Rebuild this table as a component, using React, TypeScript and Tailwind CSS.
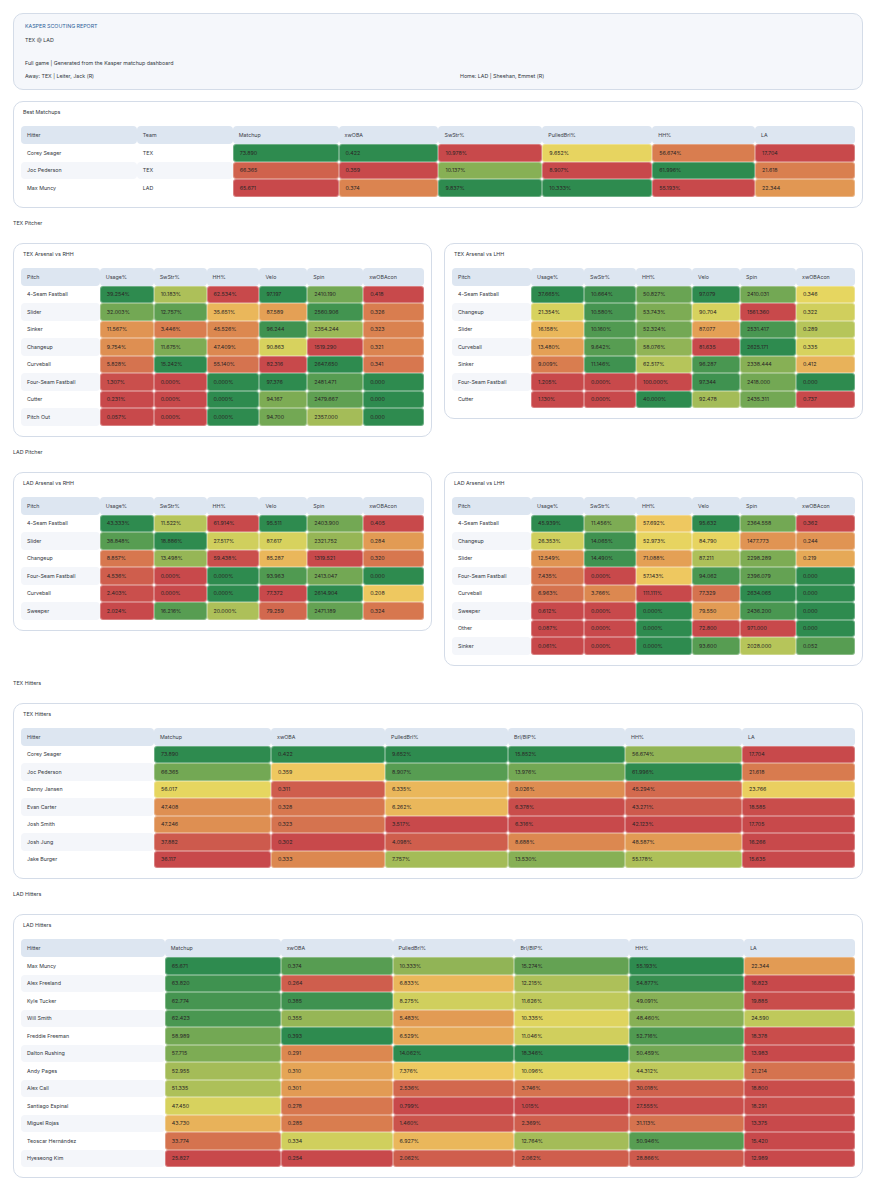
import React from "react";

type C = [string, number];
type Row = { p: string[]; c: C[] };
type Tbl = { title: string; cols: string; headers: string[]; rows: Row[] };

const stops: [number, [number, number, number]][] = [
  [0, [200, 73, 75]],
  [0.15, [210, 104, 78]],
  [0.3, [220, 136, 80]],
  [0.42, [229, 165, 86]],
  [0.5, [238, 200, 96]],
  [0.56, [230, 214, 96]],
  [0.64, [200, 205, 92]],
  [0.75, [150, 182, 86]],
  [0.87, [90, 158, 82]],
  [1, [46, 139, 79]],
];

function color(t: number): string {
  for (let i = 0; i < stops.length - 1; i++) {
    const [a, ca] = stops[i];
    const [b, cb] = stops[i + 1];
    if (t >= a && t <= b) {
      const f = (t - a) / (b - a);
      const c = ca.map((v, k) => Math.round(v + (cb[k] - v) * f));
      return `rgb(${c[0]},${c[1]},${c[2]})`;
    }
  }
  const c = t < 0 ? stops[0][1] : stops[stops.length - 1][1];
  return `rgb(${c[0]},${c[1]},${c[2]})`;
}

const r = (p: string[], ...c: C[]): Row => ({ p, c });

const best: Tbl = {
  title: "Best Matchups",
  cols: "grid-cols-[116fr_96fr_106fr_100fr_104fr_110fr_103fr_100fr]",
  headers: ["Hitter", "Team", "Matchup", "xwOBA", "SwStr%", "PulledBrl%", "HH%", "LA"],
  rows: [
    r(["Corey Seager", "TEX"], ["73.890", 1], ["0.422", 1], ["10.978%", 0], ["9.652%", 0.55], ["56.674%", 0.25], ["17.704", 0]),
    r(["Joc Pederson", "TEX"], ["66.365", 0.12], ["0.359", 0], ["10.137%", 0.78], ["8.907%", 0], ["61.996%", 1], ["21.618", 0.26]),
    r(["Max Muncy", "LAD"], ["65.671", 0], ["0.374", 0.28], ["9.837%", 1], ["10.333%", 1], ["55.193%", 0], ["22.344", 0.36]),
  ],
};

const pitchHeaders = ["Pitch", "Usage%", "SwStr%", "HH%", "Velo", "Spin", "xwOBAcon"];
const leftCols = "grid-cols-[79fr_54fr_53fr_53fr_48fr_56fr_61fr]";
const rightCols = "grid-cols-[79fr_53fr_52fr_56fr_48fr_56fr_59fr]";

const texR: Tbl = {
  title: "TEX Arsenal vs RHH",
  cols: leftCols,
  headers: pitchHeaders,
  rows: [
    r(["4-Seam Fastball"], ["39.254%", 1], ["10.183%", 0.7], ["62.534%", 0], ["97.197", 1], ["2410.190", 0.82], ["0.418", 0]),
    r(["Slider"], ["32.003%", 0.82], ["12.757%", 0.86], ["35.651%", 0.46], ["87.589", 0.4], ["2560.906", 0.94], ["0.326", 0.25]),
    r(["Sinker"], ["11.567%", 0.35], ["3.446%", 0.25], ["45.526%", 0.3], ["96.244", 0.95], ["2354.244", 0.74], ["0.323", 0.27]),
    r(["Changeup"], ["9.754%", 0.33], ["11.675%", 0.8], ["47.409%", 0.3], ["90.863", 0.6], ["1519.290", 0], ["0.321", 0.28]),
    r(["Curveball"], ["5.828%", 0.2], ["15.242%", 1], ["55.140%", 0.2], ["82.316", 0], ["2647.650", 1], ["0.341", 0.22]),
    r(["Four-Seam Fastball"], ["1.307%", 0.03], ["0.000%", 0], ["0.000%", 1], ["97.376", 1], ["2481.471", 0.88], ["0.000", 1]),
    r(["Cutter"], ["0.231%", 0], ["0.000%", 0], ["0.000%", 1], ["94.167", 0.8], ["2479.667", 0.86], ["0.000", 1]),
    r(["Pitch Out"], ["0.057%", 0], ["0.000%", 0], ["0.000%", 1], ["94.700", 0.82], ["2357.000", 0.72], ["0.000", 1]),
  ],
};

const texL: Tbl = {
  title: "TEX Arsenal vs LHH",
  cols: rightCols,
  headers: pitchHeaders,
  rows: [
    r(["4-Seam Fastball"], ["37.665%", 1], ["10.664%", 0.95], ["50.827%", 0.84], ["97.079", 1], ["2410.031", 0.82], ["0.346", 0.56]),
    r(["Changeup"], ["21.354%", 0.6], ["10.580%", 0.93], ["53.743%", 0.8], ["90.704", 0.6], ["1561.360", 0], ["0.322", 0.62]),
    r(["Slider"], ["16.158%", 0.46], ["10.160%", 0.9], ["52.324%", 0.82], ["87.077", 0.4], ["2531.417", 0.92], ["0.289", 0.68]),
    r(["Curveball"], ["13.480%", 0.4], ["9.642%", 0.88], ["58.076%", 0.76], ["81.635", 0], ["2625.171", 1], ["0.335", 0.6]),
    r(["Sinker"], ["9.009%", 0.25], ["11.146%", 0.95], ["62.517%", 0.68], ["96.287", 0.92], ["2338.444", 0.78], ["0.412", 0.45]),
    r(["Four-Seam Fastball"], ["1.205%", 0], ["0.000%", 0], ["100.000%", 0], ["97.344", 0.95], ["2418.000", 0.82], ["0.000", 1]),
    r(["Cutter"], ["1.130%", 0], ["0.000%", 0], ["40.000%", 1], ["92.478", 0.72], ["2435.311", 0.82], ["0.737", 0]),
  ],
};

const ladR: Tbl = {
  title: "LAD Arsenal vs RHH",
  cols: leftCols,
  headers: pitchHeaders,
  rows: [
    r(["4-Seam Fastball"], ["43.333%", 1], ["11.522%", 0.68], ["61.914%", 0], ["95.511", 1], ["2403.900", 0.82], ["0.405", 0]),
    r(["Slider"], ["38.848%", 0.88], ["18.886%", 1], ["27.517%", 0.62], ["87.617", 0.6], ["2321.752", 0.75], ["0.284", 0.38]),
    r(["Changeup"], ["8.857%", 0.22], ["13.498%", 0.75], ["59.438%", 0.03], ["85.287", 0.46], ["1319.521", 0], ["0.320", 0.22]),
    r(["Four-Seam Fastball"], ["4.536%", 0.1], ["0.000%", 0], ["0.000%", 1], ["93.963", 0.9], ["2413.047", 0.82], ["0.000", 1]),
    r(["Curveball"], ["2.403%", 0.03], ["0.000%", 0], ["0.000%", 1], ["77.372", 0], ["2614.904", 1], ["0.208", 0.5]),
    r(["Sweeper"], ["2.024%", 0], ["16.216%", 0.88], ["20.000%", 0.7], ["79.259", 0.15], ["2471.189", 0.85], ["0.324", 0.22]),
  ],
};

const ladL: Tbl = {
  title: "LAD Arsenal vs LHH",
  cols: rightCols,
  headers: pitchHeaders,
  rows: [
    r(["4-Seam Fastball"], ["45.939%", 1], ["11.456%", 0.8], ["57.692%", 0.5], ["95.632", 1], ["2364.558", 0.82], ["0.362", 0]),
    r(["Changeup"], ["26.353%", 0.62], ["14.065%", 0.95], ["52.973%", 0.55], ["84.790", 0.55], ["1477.773", 0.35], ["0.244", 0.35]),
    r(["Slider"], ["12.549%", 0.35], ["14.490%", 0.95], ["71.088%", 0.4], ["87.211", 0.7], ["2298.289", 0.8], ["0.219", 0.43]),
    r(["Four-Seam Fastball"], ["7.435%", 0.22], ["0.000%", 0], ["57.143%", 0.5], ["94.062", 0.92], ["2396.079", 0.85], ["0.000", 1]),
    r(["Curveball"], ["6.963%", 0.2], ["3.766%", 0.3], ["111.111%", 0], ["77.329", 0.2], ["2634.065", 1], ["0.000", 1]),
    r(["Sweeper"], ["0.612%", 0], ["0.000%", 0], ["0.000%", 1], ["79.550", 0.38], ["2436.200", 0.92], ["0.000", 1]),
    r(["Other"], ["0.087%", 0], ["0.000%", 0], ["0.000%", 1], ["72.800", 0], ["971.000", 0], ["0.000", 1]),
    r(["Sinker"], ["0.061%", 0], ["0.000%", 0], ["0.000%", 1], ["93.600", 0.88], ["2028.000", 0.68], ["0.052", 0.88]),
  ],
};

const hitHeaders = ["Hitter", "Matchup", "xwOBA", "PulledBrl%", "Brl/BIP%", "HH%", "LA"];

const texH: Tbl = {
  title: "TEX Hitters",
  cols: "grid-cols-[133fr_117fr_114fr_123fr_117fr_117fr_113fr]",
  headers: hitHeaders,
  rows: [
    r(["Corey Seager"], ["73.890", 1], ["0.422", 1], ["9.652%", 1], ["15.852%", 1], ["56.674%", 0.76], ["17.704", 0]),
    r(["Joc Pederson"], ["66.365", 0.82], ["0.359", 0.5], ["8.907%", 0.88], ["13.976%", 0.82], ["61.996%", 1], ["21.618", 0.24]),
    r(["Danny Jansen"], ["56.017", 0.56], ["0.311", 0.1], ["6.335%", 0.46], ["9.026%", 0.32], ["45.294%", 0.16], ["23.766", 0.53]),
    r(["Evan Carter"], ["47.408", 0.33], ["0.328", 0.22], ["6.262%", 0.46], ["6.378%", 0.02], ["43.271%", 0.08], ["18.585", 0.02]),
    r(["Josh Smith"], ["47.246", 0.33], ["0.323", 0.2], ["3.517%", 0], ["6.316%", 0], ["42.123%", 0], ["17.705", 0]),
    r(["Josh Jung"], ["37.882", 0.08], ["0.302", 0], ["4.098%", 0.1], ["8.688%", 0.3], ["48.587%", 0.38], ["16.266", 0]),
    r(["Jake Burger"], ["36.117", 0], ["0.333", 0.3], ["7.757%", 0.72], ["13.530%", 0.78], ["55.178%", 0.7], ["15.635", 0]),
  ],
};

const ladH: Tbl = {
  title: "LAD Hitters",
  cols: "grid-cols-[144fr_116fr_112fr_122fr_115fr_115fr_111fr]",
  headers: hitHeaders,
  rows: [
    r(["Max Muncy"], ["65.671", 1], ["0.374", 0.88], ["10.333%", 0.76], ["15.274%", 0.85], ["55.193%", 1], ["22.344", 0.38]),
    r(["Alex Freeland"], ["63.820", 0.95], ["0.264", 0.1], ["6.833%", 0.46], ["12.215%", 0.7], ["54.877%", 0.97], ["16.823", 0]),
    r(["Kyle Tucker"], ["62.774", 0.93], ["0.385", 0.95], ["8.275%", 0.62], ["11.626%", 0.66], ["49.091%", 0.78], ["19.885", 0.02]),
    r(["Will Smith"], ["62.423", 0.92], ["0.355", 0.75], ["5.483%", 0.38], ["10.335%", 0.58], ["48.460%", 0.78], ["24.590", 0.66]),
    r(["Freddie Freeman"], ["58.989", 0.82], ["0.393", 1], ["6.529%", 0.43], ["11.046%", 0.62], ["52.716%", 0.9], ["18.378", 0.02]),
    r(["Dalton Rushing"], ["57.715", 0.8], ["0.291", 0.3], ["14.062%", 1], ["18.346%", 1], ["50.459%", 0.82], ["13.983", 0]),
    r(["Andy Pages"], ["52.955", 0.72], ["0.310", 0.42], ["7.376%", 0.5], ["10.096%", 0.57], ["44.312%", 0.66], ["21.214", 0.2]),
    r(["Alex Call"], ["51.335", 0.7], ["0.301", 0.38], ["2.536%", 0.15], ["3.746%", 0.2], ["30.018%", 0.12], ["18.800", 0.02]),
    r(["Santiago Espinal"], ["47.450", 0.6], ["0.278", 0.22], ["0.799%", 0], ["1.015%", 0], ["27.555%", 0.03], ["18.291", 0.02]),
    r(["Miguel Rojas"], ["43.730", 0.45], ["0.285", 0.25], ["1.460%", 0.05], ["2.369%", 0.1], ["31.113%", 0.2], ["13.375", 0]),
    r(["Teoscar Hernández"], ["33.774", 0.2], ["0.334", 0.62], ["6.927%", 0.46], ["12.764%", 0.72], ["50.946%", 0.88], ["15.420", 0]),
    r(["Hyeseong Kim"], ["25.827", 0], ["0.254", 0], ["2.062%", 0.1], ["2.062%", 0.1], ["28.866%", 0.08], ["12.989", 0]),
  ],
};

function DataTable({ t }: { t: Tbl }) {
  return (
    <div className="flex flex-col">
      <div className={`grid ${t.cols}`}>
        {t.headers.map((h) => (
          <div key={h} className="h-[18px] flex items-center px-[6px] rounded-[4px] bg-[#dde6f1] text-[#3b4048] whitespace-nowrap overflow-hidden">
            {h}
          </div>
        ))}
      </div>
      {t.rows.map((row, i) => (
        <div key={i} className={`grid ${t.cols}`}>
          {row.p.map((x, k) => (
            <div
              key={k}
              className={`h-[17.5px] flex items-center px-[6px] rounded-[4px] text-[#33373d] whitespace-nowrap overflow-hidden ${i % 2 === 1 ? "bg-[#f4f6fa]" : ""}`}
            >
              {x}
            </div>
          ))}
          {row.c.map(([v, tv], k) => (
            <div
              key={k}
              className="h-[17.5px] flex items-center px-[6px] rounded-[3px] border border-white/30 text-[#2a2626] whitespace-nowrap overflow-hidden"
              style={{ backgroundColor: color(tv) }}
            >
              {v}
            </div>
          ))}
        </div>
      ))}
    </div>
  );
}

function Card({ t }: { t: Tbl }) {
  return (
    <div className="rounded-[10px] border border-[#d4dce8] bg-white px-[7px] pt-[6px] pb-[10px]">
      <div className="pl-[2px] mb-[10px] text-[#33373d]">{t.title}</div>
      <DataTable t={t} />
    </div>
  );
}

function Section({ label, children, extra = "" }: { label: string; children: React.ReactNode; extra?: string }) {
  return (
    <div className={`flex flex-col gap-[16px] ${extra}`}>
      <div className="text-[#33373d]">{label}</div>
      {children}
    </div>
  );
}

export default function App() {
  return (
    <div className="min-h-[1200px] bg-white font-['Inter',sans-serif] text-[5.3px] leading-[8px] p-[13px] flex flex-col gap-[11px]">
      <div className="rounded-[10px] border border-[#d4dce8] bg-[#f5f7fb] px-[11px] pt-[8px] pb-[9px] text-[#33373d]">
        <div className="mb-[6px] text-[#2f5f9a]">KASPER SCOUTING REPORT</div>
        <div className="mb-[15px]">TEX @ LAD</div>
        <div className="mb-[5px]">Full game | Generated from the Kasper matchup dashboard</div>
        <div className="grid grid-cols-[435px_1fr]">
          <div>Away: TEX | Leiter, Jack (R)</div>
          <div>Home: LAD | Sheehan, Emmet (R)</div>
        </div>
      </div>

      <Card t={best} />

      <Section label="TEX Pitcher">
        <div className="grid grid-cols-2 gap-[12px] items-start">
          <Card t={texR} />
          <Card t={texL} />
        </div>
      </Section>

      <Section label="LAD Pitcher">
        <div className="grid grid-cols-2 gap-[12px] items-start">
          <Card t={ladR} />
          <Card t={ladL} />
        </div>
      </Section>

      <Section label="TEX Hitters" extra="mt-[2px]">
        <Card t={texH} />
      </Section>

      <Section label="LAD Hitters">
        <Card t={ladH} />
      </Section>
    </div>
  );
}
